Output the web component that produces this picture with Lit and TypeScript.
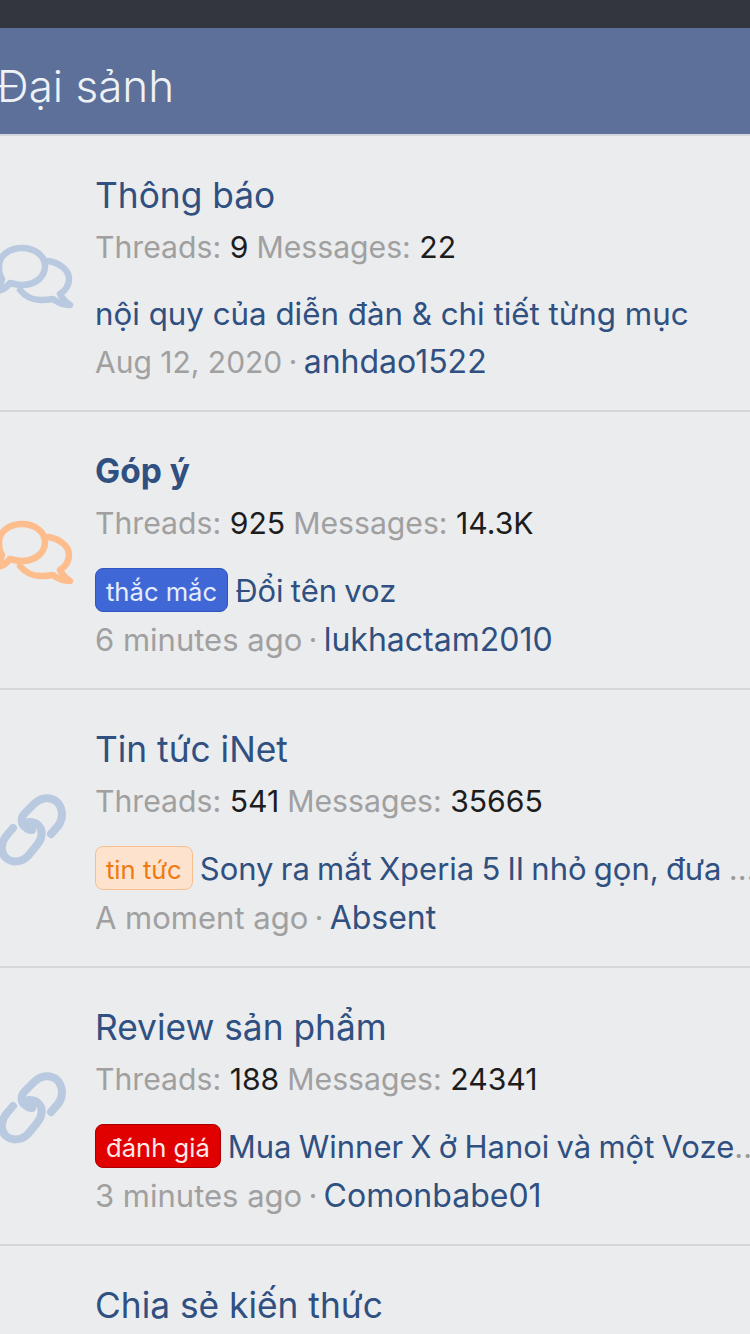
import { LitElement, html, css, svg } from "lit";
import { customElement } from "lit/decorators.js";

const chat = svg`<svg class="ic chat" viewBox="0 0 80 85" width="80" height="85" fill="none" stroke="currentColor" stroke-width="6.5" stroke-linejoin="round" stroke-linecap="round"><path d="M22 14C35 14 45 22 45 32C45 43 35 51 22 51C18 51 14 50 10 49C7 53 3 56 -3 57C0 53 1 48 2 45C-1 41 -1 37 -1 32C-1 22 9 14 22 14Z"/><path d="M48 27C60 29 69 36 69 45C69 51 66 56 60 60C62 64 65 68 70 71C63 71 58 69 53 65C48 66 44 66 40 66C32 66 25 62 20 56"/></svg>`;
const link = svg`<svg class="ic" viewBox="0 0 80 90" width="80" height="90" fill="none" stroke="currentColor" stroke-width="8" stroke-linecap="round" stroke-linejoin="round"><path d="M51 49L58 41C64 33 63 22 56 16C49 11 40 13 34 19L25 28C20 33 21 39 25 42C27 44 30 45 32 45"/><path d="M13 43L7 50C1 57 0 66 5 72C11 78 21 78 28 71L37 60C43 53 43 44 38 40C35 37 31 37 29 37"/></svg>`;

const rows = [
  { t: "Thông báo", th: "9", m: "22", last: "nội quy của diễn đàn & chi tiết từng mục", when: "Aug 12, 2020", date: true, who: "anhdao1522", icon: "chat", c: "#b8c9e0" },
  { t: "Góp ý", bold: true, th: "925", m: "14.3K", tag: "thắc mắc", tc: "blue", last: "Đổi tên voz", when: "6 minutes ago", who: "lukhactam2010", icon: "chat", c: "#fdbd8d" },
  { t: "Tin tức iNet", th: "541", m: "35665", tag: "tin tức", tc: "orange", last: "Sony ra mắt Xperia 5 II nhỏ gọn, đưa cả flagship", when: "A moment ago", who: "Absent", icon: "link", c: "#b8c9e0" },
  { t: "Review sản phẩm", th: "188", m: "24341", tag: "đánh giá", tc: "red", last: "Mua Winner X ở Hanoi và một Vozer tốt bụng", when: "3 minutes ago", who: "Comonbabe01", icon: "link", c: "#b8c9e0" },
];

@customElement("app-root")
export class AppRoot extends LitElement {
  static styles = css`
    :host { display: block; width: 750px; height: 1334px; overflow: hidden; background: #ebecee; font-family: "Inter", "Noto Sans", sans-serif; }
    .status { height: 28px; background: #33363f; }
    .head { height: 108px; box-sizing: border-box; background: #5c7099; color: #eef1f6; font-size: 44px; font-weight: 300; line-height: 116px; white-space: nowrap; text-indent: -3px; border-bottom: 2px solid #d3d6dc; }
    .row { box-sizing: border-box; border-bottom: 2px solid #d5d7da; display: flex; padding-bottom: 28px; }
    .iconcol { width: 95px; flex: none; padding-top: 95px; }
    .ic { display: block; overflow: visible; }
    .chat { margin-top: 3px; }
    .body { width: 669px; flex: none; padding-top: 37px; display: flex; flex-direction: column; }
    .title { font-size: 35.3px; line-height: 46px; height: 44px; color: #2f5080; white-space: nowrap; }
    .bold { font-weight: 700; font-size: 33.5px; line-height: 44px; }
    .stats { display: flex; gap: 8px; font-size: 30.2px; line-height: 40px; margin-top: 10px; color: #a0a0a0; white-space: nowrap; }
    .stats b { font-weight: 400; color: #1d1d1d; }
    .last { margin-top: 25px; padding-top: 2px; display: flex; align-items: center; gap: 7px; white-space: nowrap; font-size: 31px; line-height: 40px; color: #9a9a9a; word-spacing: -1.5px; }
    .last.plain { font-size: 31.3px; word-spacing: 0; }
    .lasttext { overflow: hidden; text-overflow: ellipsis; min-width: 0; }
    .lasttext a { color: #2f5080; }
    .tag { flex: none; box-sizing: border-box; height: 44px; margin-top: -2px; line-height: 45px; font-size: 25.6px; padding: 0 10px; border-radius: 8px; border: 1px solid; word-spacing: 0; }
    .blue { background: #3f68d6; border-color: #2e55c0; color: #e6ecfb; }
    .orange { background: #fde3cd; border-color: #fbbf8e; color: #ef7a12; }
    .red { background: #e00000; border-color: #a80000; color: #fde8e8; }
    .meta { font-size: 31px; line-height: 40px; margin-top: 8px; color: #a0a0a0; white-space: nowrap; }
    .meta .date { font-size: 30px; }
    .meta .dot { margin: 0 -2.5px; }
    .meta a { color: #2f5080; font-size: 32px; }
  `;
  render() {
    return html`
      <div class="status"></div>
      <div class="head">Đại sảnh</div>
      ${rows.map((r) => html`<div class="row">
        <div class="iconcol" style="color:${r.c}">${r.icon === "chat" ? chat : link}</div>
        <div class="body">
          <div class="title ${r.bold ? "bold" : ""}">${r.t}</div>
          <div class="stats"><span>Threads: <b>${r.th}</b></span><span>Messages: <b>${r.m}</b></span></div>
          <div class="last ${r.tag ? "" : "plain"}">${r.tag ? html`<span class="tag ${r.tc}">${r.tag}</span>` : ""}<span class="lasttext"><a>${r.last}</a></span></div>
          <div class="meta"><span class="${r.date ? "date" : ""}">${r.when}</span> <span class="dot">·</span> <a>${r.who}</a></div>
        </div>
      </div>`)}
      <div class="row"><div class="iconcol"></div><div class="body"><div class="title">Chia sẻ kiến thức</div></div></div>
    `;
  }
}
